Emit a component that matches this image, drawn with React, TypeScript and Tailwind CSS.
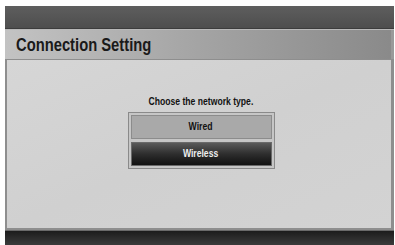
const font = { fontFamily: '"Liberation Sans", Arial, sans-serif' };

const ConnectionSetting = () => {
  return (
    <div className="w-[395px] h-[245px] bg-white pt-[6px] pl-[5px] pr-[1px] overflow-hidden" style={font}>
      <div className="flex flex-col h-full">
        {/* top dark band */}
        <div className="h-[22px] bg-gradient-to-b from-[#5e5e5e] to-[#4e4e4e]" />
        <div className="h-[1px] bg-[#3c3c3c]" />
        <div className="h-[1px] bg-[#b8b8b8]" />

        {/* title bar */}
        <div className="h-[29px] flex items-center pl-[11px] pt-[1px] bg-gradient-to-r from-[#c3c3c3] via-[#a4a4a4] to-[#8a8a8a] border-r-[3px] border-[#9a9a9a]">
          <span className="inline-block origin-left scale-x-[0.82] text-[18px] font-bold leading-none text-[#1a1a1a] whitespace-nowrap">
            Connection Setting
          </span>
        </div>

        {/* main panel */}
        <div className="flex-1 border-l-[2px] border-r-[3px] border-b-[2px] border-t border-[#8e8e8e] bg-gradient-to-br from-[#d6d6d6] via-[#d0d0d0] to-[#d3d3d3] flex flex-col items-center pt-[36px] pl-[4px]">
          <p className="inline-block scale-x-[0.82] text-[10.5px] font-bold leading-none text-[#111] mb-[5px] whitespace-nowrap">
            Choose the network type.
          </p>
          <div className="w-[147px] border border-[#8a8a8a] bg-[#c6c6c6] p-[2px] flex flex-col gap-[3px]">
            <div className="h-[24px] border border-[#8c8c8c] bg-[#a9a9a9] flex items-center justify-center">
              <span className="inline-block scale-x-[0.82] text-[10.5px] font-bold text-[#111]">Wired</span>
            </div>
            <div className="h-[24px] border border-[#6a6a6a] bg-gradient-to-b from-[#5a5a5a] via-[#2e2e2e] to-[#111] flex items-center justify-center">
              <span className="inline-block scale-x-[0.82] text-[10.5px] font-bold text-[#eeeeee]">Wireless</span>
            </div>
          </div>
        </div>

        {/* bottom dark band */}
        <div className="h-[1px] bg-[#6a6a6a]" />
        <div className="h-[14px] bg-gradient-to-b from-[#1c1c1c] via-[#2c2c2c] to-[#3a3a3a]" />
      </div>
    </div>
  );
};

export default function App() {
  return <ConnectionSetting />;
}
